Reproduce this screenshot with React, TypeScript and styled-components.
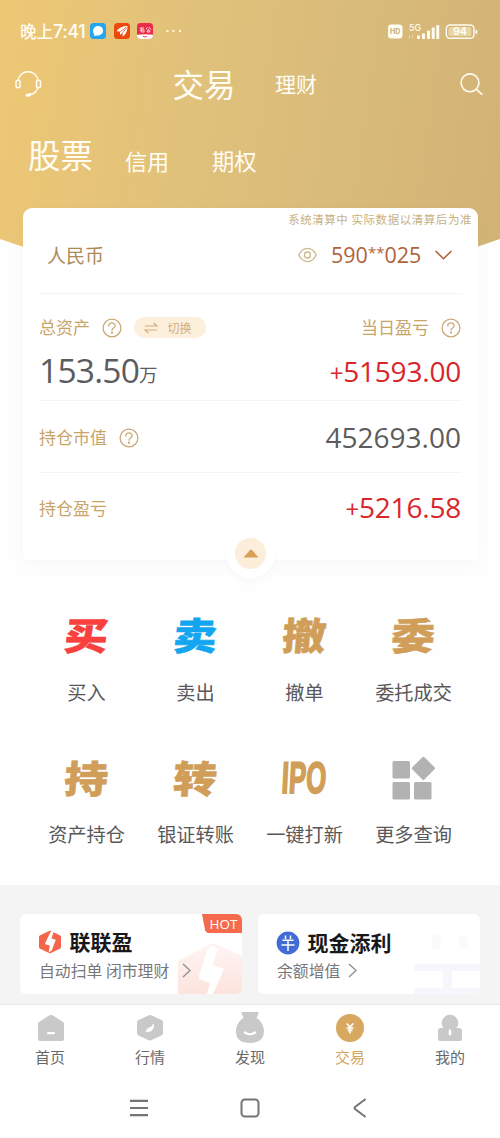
import React from "react";
import styled, { createGlobalStyle } from "styled-components";

const Global = createGlobalStyle`
  * { box-sizing: border-box; }
  body { margin: 0; background: #fff; font-family: "Noto Sans CJK SC", sans-serif; }
  svg { display: block; flex: none; }
`;

const Page = styled.main`
  width: 500px;
  height: 1138px;
  overflow: hidden;
  display: flex;
  flex-direction: column;
  background: #fefefe;
`;

/* ---------- header ---------- */
const Header = styled.header`
  height: 290px;
  flex: none;
  color: #fffdf5;
  background: linear-gradient(98deg, #edc774 0%, #e0c17b 40%, #d8ba7a 70%, #d2b376 100%);
  clip-path: polygon(0 0, 100% 0, 100% 239px, 350px 290px, 150px 290px, 0 239px);
`;
const StatusBar = styled.div`
  height: 62px;
  padding: 0 19px 0 20px;
  display: flex;
  align-items: center;
  justify-content: space-between;
`;
const StatusGroup = styled.div`
  display: flex;
  align-items: center;
`;
const Clock = styled.span`
  font: 500 16.5px/24px "Noto Sans CJK SC", sans-serif;
  width: 70px;
  white-space: nowrap;
  b { font: 500 18px/24px Inter, sans-serif; letter-spacing: -0.4px; }
`;
const AppIcons = styled.div`
  display: flex;
  gap: 7.5px;
  align-items: center;
`;
const TitleBar = styled.div`
  height: 44px;
  display: flex;
  align-items: center;
  padding: 0 16px 0 14px;
`;
const HeadTab = styled.span<{ $size: number; $ml?: number; $top?: number; $up?: number }>`
  font-size: ${(p) => p.$size}px;
  line-height: 44px;
  margin-left: ${(p) => p.$ml ?? 0}px;
  padding-top: ${(p) => p.$top ?? 0}px;
  padding-bottom: ${(p) => p.$up ?? 0}px;
  white-space: nowrap;
`;
const Push = styled.span`
  flex: 1;
`;
const MarketTabs = styled.div`
  display: flex;
  padding: 26px 0 0 28px;
`;

/* ---------- asset card ---------- */
const Card = styled.section`
  position: relative;
  width: 455px;
  height: 352px;
  flex: none;
  margin: -82px 0 0 23px;
  padding: 0 16px;
  background: #fff;
  border-radius: 9px 9px 4px 4px;
  box-shadow: 0 6px 16px rgba(120, 90, 90, 0.04);
`;
const Notice = styled.div`
  height: 22px;
  margin-right: -10px;
  text-align: right;
  font-size: 11.5px;
  letter-spacing: 0.55px;
  line-height: 22px;
  color: #c6b183;
  white-space: nowrap;
`;
const Row = styled.div<{ $h: number; $pl?: number; $pt?: number; $pb?: number }>`
  display: flex;
  align-items: center;
  height: ${(p) => p.$h}px;
  padding: ${(p) => p.$pt ?? 0}px 1px ${(p) => p.$pb ?? 0}px ${(p) => p.$pl ?? 0}px;
`;
const Rule = styled.div`
  height: 1px;
  background: #f5f4f4;
`;
const Currency = styled.span`
  font-size: 19px;
  color: #ae8a59;
`;
const Account = styled.span`
  display: flex;
  font: 400 21.5px/30px "Open Sans", sans-serif;
  color: #b0623a;
  margin: 0 13px 0 14px;
  width: 91px;
  white-space: nowrap;
  i { font-style: normal; font-size: 15px; line-height: 25px; }
`;
const Label = styled.span`
  font-size: 17px;
  line-height: 24px;
  padding-bottom: 2px;
  color: #c9a468;
  margin-right: 12px;
`;
const Switch = styled.span`
  display: flex;
  align-items: center;
  justify-content: center;
  gap: 9px;
  width: 72px;
  height: 21px;
  padding-right: 4px;
  margin-left: 12px;
  border-radius: 11px;
  background: #fcefdc;
  color: #d3ae7b;
  font-size: 12px;
`;
const Amount = styled.span<{ $up?: boolean }>`
  font: 400 28px/36px "Open Sans", sans-serif;
  letter-spacing: ${(p) => (p.$up ? -0.2 : 0)}px;
  padding-bottom: 2px;
  color: ${(p) => (p.$up ? "#d9262c" : "#5c5c5e")};
  i { font-style: normal; font-size: 24px; }
`;
const Total = styled(Amount)`
  font-size: 33.5px;
  letter-spacing: -0.75px;
  padding-bottom: 7px;
`;
const Unit = styled.span`
  font-size: 18.5px;
  line-height: 36px;
  color: #5c5c5e;
  padding-top: 1px;
`;
const Collapse = styled.div`
  position: absolute;
  left: 203px;
  top: 321px;
  width: 49px;
  height: 49px;
  border-radius: 50%;
  background: #fff;
  box-shadow: 0 4px 6px rgba(120, 90, 90, 0.03);
  display: flex;
  align-items: center;
  justify-content: center;
`;
const CollapseDot = styled.div`
  width: 31px;
  height: 31px;
  border-radius: 50%;
  background: #fceedb;
  display: flex;
  align-items: center;
  justify-content: center;
`;

/* ---------- actions ---------- */
const Actions = styled.section`
  display: grid;
  grid-template-columns: repeat(4, 109px);
  grid-auto-rows: 142.5px;
  padding: 45px 32px 0;
  height: 325px;
  flex: none;
`;
const Action = styled.div`
  display: flex;
  flex-direction: column;
  align-items: center;
`;
const GlyphBox = styled.div`
  height: 60px;
  display: flex;
  align-items: center;
  justify-content: center;
`;
const Glyph = styled.span<{ $color: string }>`
  font: 900 42px/60px "Noto Sans CJK SC", sans-serif;
  color: ${(p) => p.$color};
  -webkit-text-stroke: 0.6px ${(p) => p.$color};
  transform: translate(0.5px, -1px) scale(1.04, 0.9) skewX(-4deg);
`;
const Ipo = styled(Glyph)`
  font: 700 43px/60px "Liberation Sans", sans-serif;
  -webkit-text-stroke-width: 1.8px;
  transform: translate(0, -0.5px) scale(0.6, 1.03) skewX(-5deg);
  margin: 0 -20px;
`;
const ActionLabel = styled.span`
  font-size: 19.2px;
  line-height: 28px;
  margin-top: 12.5px;
  color: #58585a;
  white-space: nowrap;
`;

/* ---------- promotions ---------- */
const Promos = styled.section`
  height: 119px;
  flex: none;
  background: #f4f4f4;
  padding: 29px 20px 0;
  display: grid;
  grid-template-columns: 222px 222px;
  gap: 16px;
`;
const Promo = styled.article`
  position: relative;
  height: 80px;
  padding: 13px 0 0 18px;
  background: #fff;
  border-radius: 6px;
  overflow: hidden;
`;
const PromoTitle = styled.div<{ $drop?: number }>`
  position: relative;
  display: flex;
  align-items: center;
  gap: 7.5px;
  height: 30px;
  top: ${(p) => p.$drop ?? 0}px;
  font-weight: 700;
  font-size: 21px;
  line-height: 28px;
  color: #18181a;
  span { padding-bottom: 2px; }
`;
const PromoText = styled.div<{ $gap: number }>`
  position: relative;
  display: flex;
  align-items: center;
  gap: ${(p) => p.$gap}px;
  height: 27px;
  padding-left: 1px;
  font-size: 15.85px;
  color: #77777a;
  white-space: nowrap;
`;
const Watermark = styled.div`
  position: absolute;
  right: 0;
  bottom: 0;
`;
const Hot = styled.div`
  position: absolute;
  right: 0;
  top: 0;
  width: 40px;
  height: 19px;
  padding-left: 3px;
  text-align: center;
  background: #f5694c;
  clip-path: polygon(0 0, 100% 0, 100% 100%, 14% 100%, 8% 88%);
  color: #fff;
  font: 400 13.5px/20px "Open Sans", sans-serif;
`;

/* ---------- bottom navigation ---------- */
const TabBar = styled.nav`
  height: 74px;
  flex: none;
  border-top: 1px solid #e8e8e8;
  background: #fff;
  display: grid;
  grid-template-columns: repeat(5, 100px);
`;
const Tab = styled.div<{ $active?: boolean }>`
  display: flex;
  flex-direction: column;
  align-items: center;
  padding-top: 5px;
  font-size: 15px;
  line-height: 22px;
  color: ${(p) => (p.$active ? "#d3a45e" : "#68686a")};
`;
const SystemNav = styled.div`
  height: 60px;
  flex: none;
  display: flex;
  justify-content: center;
  align-items: center;
  gap: 90.5px;
  padding-right: 1px;
`;

const Help = () => (
  <svg width="20" height="20" viewBox="0 0 20 20" fill="none" stroke="#c9a976" strokeWidth="1.3">
    <circle cx="10" cy="10" r="8.9" />
    <path d="M6.8 8C6.8 3.9 13.3 4 13.2 7.9C13.1 10 10 10.2 10 12.2" strokeLinecap="round" />
    <circle cx="10" cy="14.7" r=".5" fill="#c9a976" />
  </svg>
);

const Chevron = () => (
  <svg width="9" height="15" viewBox="0 0 9 15" fill="none" stroke="#929294" strokeWidth="1.4">
    <path d="M1 1L8 7.5L1 14" />
  </svg>
);

const HexBolt = () => (
  <svg width="24" height="24" viewBox="0 0 24 24">
    <path d="M12 .5L22.2 5.4Q23 6 23 7V17Q23 18 22.2 18.6L12 23.5L1.8 18.6Q1 18 1 17V7Q1 6 1.8 5.4Z" fill="#f4664a" />
    <path d="M15.7 1.5L13.5 8.5L17.8 9.7L13.7 20.5L10.7 22.5L11.7 15.5L7.2 14.2Q6.8 13.5 7.5 12.5L13 1Z" fill="#fff" />
  </svg>
);

const actions = [
  ["买", "买入", "#f8403f"],
  ["卖", "卖出", "#13a5ef"],
  ["撤", "撤单", "#d09e58"],
  ["委", "委托成交", "#d09e58"],
  ["持", "资产持仓", "#d09e58"],
  ["转", "银证转账", "#d09e58"],
  ["IPO", "一键打新", "#d09e58"],
  ["", "更多查询", "#b2b2b2"],
];

export default function App() {
  return (
    <Page>
      <Global />
      <Header>
        <StatusBar>
          <StatusGroup>
            <Clock>晚上<b>7:41</b></Clock>
            <AppIcons>
              <svg width="16" height="16" viewBox="0 0 16 16">
                <rect width="16" height="16" rx="3.5" fill="#23a6f2" />
                <path d="M3.1 8.5C3 4.8 5.5 2.8 8.5 2.9C11.6 3 13.2 5.2 13 8C12.8 11.4 9.5 13 6.5 12.4L3.9 13L4.3 11.4C3.5 10.7 3.1 9.7 3.1 8.5Z" fill="#fff" />
              </svg>
              <svg width="16" height="16" viewBox="0 0 16 16">
                <rect width="16" height="16" rx="3.5" fill="#ec4a0c" />
                <path d="M2.6 8.3C5 4.5 9 3 13.5 3C13.7 7.5 12 11.5 8.5 13.5L8.6 10L6.2 11.8L5.8 8.5Z" fill="#fff" />
                <path d="M12.5 4L5.8 9.2M13 4.5L8 10.4" stroke="#ec4a0c" strokeWidth=".7" />
              </svg>
              <svg width="16" height="16" viewBox="0 0 16 16">
                <rect width="16" height="16" rx="3.5" fill="#ea2e49" />
                <path d="M0 11.8Q8 10.8 16 11.8V12.5Q16 16 12.5 16H3.5Q0 16 0 12.5Z" fill="#fff" />
                <path d="M2.8 5H7M5 5L3 8M4.3 6.8H7V9H4.3ZM10.5 4.2L9 6.2M12 4.2L14 6.7M10 9L11.5 6.2L13 9Z" stroke="#fff" strokeWidth=".8" fill="none" />
                <path d="M6 13.3L8 14L10 13.3" stroke="#ea2e49" strokeWidth=".9" fill="none" />
              </svg>
              <svg width="25" height="4" viewBox="-5 0 25 4" fill="#fff8dc">
                <circle cx="1.5" cy="2" r="1.2" /><circle cx="7.5" cy="2" r="1.2" /><circle cx="14" cy="2" r="1.2" />
              </svg>
            </AppIcons>
          </StatusGroup>
          <svg width="93" height="22" viewBox="0 0 93 22" fill="#fffdf2">
            <rect x="0" y="4.5" width="14.5" height="14" rx="3.2" />
            <text x="7.2" y="14" textAnchor="middle" fontFamily="Inter" fontSize="7" fontWeight="700" fill="#c8ad72">HD</text>
            <text x="21" y="10.5" fontFamily="Inter" fontSize="9" fontWeight="500">5G</text>
            <path d="M21.5 15.5V18.5M24.5 15V18" stroke="#f4e5b2" strokeWidth=".8" />
            <rect x="29" y="15.5" width="3" height="3.5" rx=".8" />
            <rect x="34" y="13.5" width="3" height="5.5" rx=".8" />
            <rect x="39" y="10.5" width="3" height="8.5" rx=".8" />
            <rect x="43.7" y="7.5" width="3" height="11.5" rx=".8" />
            <rect x="48.3" y="5" width="2.9" height="14" rx=".8" />
            <rect x="58.3" y="5" width="27.7" height="13.3" rx="3.8" fill="none" stroke="#fffdf2" strokeWidth="1.4" />
            <rect x="60.3" y="7" width="23" height="9.3" rx="2" fill="#e7d5a4" />
            <rect x="87.5" y="9.8" width="1.8" height="4" rx=".9" />
            <text x="72" y="15.3" textAnchor="middle" fontFamily="Inter" fontSize="10.5" fontWeight="700">94</text>
          </svg>
        </StatusBar>
        <TitleBar>
          <svg width="28" height="28" viewBox="0 0 28 28" fill="none" stroke="#fffdf5" strokeWidth="1.5">
            <path d="M4 10.3C5 5 9.2 1.7 14 1.7S23 5 24.2 10.3M24 17C23 21 20 24 16 24.6" />
            <rect x="2" y="10.2" width="4" height="7.5" rx="2" />
            <rect x="22.5" y="10.2" width="4" height="7.5" rx="2" />
            <path d="M13 25.2L15.8 24.8" strokeWidth="3" strokeLinecap="round" />
          </svg>
          <HeadTab $size={31.5} $ml={130.5} $up={3}>交易</HeadTab>
          <HeadTab $size={21} $ml={39.5} $up={2}>理财</HeadTab>
          <Push />
          <svg width="24" height="24" viewBox="0 0 24 24" fill="none" stroke="#fffdf5" strokeWidth="1.6" strokeLinecap="round">
            <circle cx="10" cy="10.8" r="8.9" />
            <path d="M16.5 17.3L22 22.3" />
          </svg>
        </TitleBar>
        <MarketTabs>
          <HeadTab $size={32.5}>股票</HeadTab>
          <HeadTab $size={22} $ml={32} $top={6}>信用</HeadTab>
          <HeadTab $size={22.3} $ml={43} $top={6}>期权</HeadTab>
        </MarketTabs>
      </Header>

      <Card>
        <Notice>系统清算中 实际数据以清算后为准</Notice>
        <Row $h={63} $pl={8} $pb={14}>
          <Currency>人民币</Currency>
          <Push />
          <svg width="19" height="16" viewBox="0 0 19 16" fill="none" stroke="#ccb88b" strokeWidth="1.3">
            <path d="M.8 8C5-0.8 14-0.8 18.2 8C14 16.8 5 16.8.8 8Z" />
            <circle cx="9.5" cy="8" r="3" />
          </svg>
          <Account>590<i>**</i>025</Account>
          <svg width="26" height="10" viewBox="0 0 26 10" fill="none" stroke="#b0623a" strokeWidth="1.6">
            <path d="M.6 1L8.5 8.7L16.4 1" />
          </svg>
        </Row>
        <Rule />
        <Row $h={52} $pt={15}>
          <Label>总资产</Label>
          <Help />
          <Switch>
            <svg width="14" height="12" viewBox="0 0 14 12" fill="none" stroke="#d3ae7b" strokeWidth="1.2">
              <path d="M1 4H13L9.5 1M13 8H1L4.5 11" />
            </svg>
            切换
          </Switch>
          <Push />
          <Label>当日盈亏</Label>
          <Help />
        </Row>
        <Row $h={54}>
          <Total>153.50</Total>
          <Unit>万</Unit>
          <Push />
          <Amount $up><i>+</i>51593.00</Amount>
        </Row>
        <Rule />
        <Row $h={71} $pt={2}>
          <Label>持仓市值</Label>
          <Help />
          <Push />
          <Amount>452693.00</Amount>
        </Row>
        <Rule />
        <Row $h={72}>
          <Label>持仓盈亏</Label>
          <Push />
          <Amount $up><i>+</i>5216.58</Amount>
        </Row>
        <Collapse>
          <CollapseDot>
            <svg width="16" height="9" viewBox="0 0 16 9"><path d="M.5 8.5L7 1Q8 0 9 1L15.5 8.5Z" fill="#d99f56" /></svg>
          </CollapseDot>
        </Collapse>
      </Card>

      <Actions>
        {actions.map(([glyph, label, color]) => (
          <Action key={label}>
            <GlyphBox>
              {glyph === "" ? (
                <svg width="44" height="44" viewBox="0 0 44 44" fill={color}>
                  <rect x="0.5" y="5" width="17.5" height="17.5" rx="1.5" />
                  <rect x="0.5" y="26" width="17.5" height="17.5" rx="1.5" />
                  <rect x="22" y="26" width="17.5" height="17.5" rx="1.5" />
                  <rect x="22.8" y="3.7" width="17.2" height="17.2" rx="1.5" transform="rotate(45 31.4 12.3)" />
                </svg>
              ) : glyph === "IPO" ? (
                <Ipo $color={color}>{glyph}</Ipo>
              ) : (
                <Glyph $color={color}>{glyph}</Glyph>
              )}
            </GlyphBox>
            <ActionLabel>{label}</ActionLabel>
          </Action>
        ))}
      </Actions>

      <Promos>
        <Promo>
          <Watermark>
            <svg width="64" height="52" viewBox="0 0 64 52">
              <defs>
                <linearGradient id="blush" x1="0" y1="0" x2="0" y2="1">
                  <stop offset="0" stopColor="#fef5f3" />
                  <stop offset="1" stopColor="#fde3dd" />
                </linearGradient>
              </defs>
              <path d="M0 19L32 2Q35 .5 38 2L64 14V52H0Z" fill="url(#blush)" />
              <path d="M29 8L33 4L40 6L35 23L46 27L35 52H29L32 41L21 37V34Z" fill="#fff" />
            </svg>
          </Watermark>
          <Hot>HOT</Hot>
          <PromoTitle>
            <HexBolt />
            <span>联联盈</span>
          </PromoTitle>
          <PromoText $gap={13}>自动扫单 闭市理财<Chevron /></PromoText>
        </Promo>
        <Promo>
          <Watermark>
            <svg width="66" height="62" viewBox="0 0 66 62" fill="#f6f7fd">
              <rect x="18" y="3" width="9" height="14" fill="#fbfbfe" />
              <rect x="45" y="3" width="9" height="14" fill="#fbfbfe" />
              <rect x="0" y="32" width="66" height="7" />
              <rect x="29" y="39" width="9" height="17" />
              <rect x="0" y="56" width="66" height="6" />
            </svg>
          </Watermark>
          <PromoTitle $drop={1}>
            <svg width="24" height="24" viewBox="0 0 24 24" fill="none" stroke="#fff" strokeWidth="1.5">
              <circle cx="12" cy="12" r="11.4" fill="#426bd3" stroke="none" />
              <path d="M9.5 4.5V8M14.5 4.5V8M6.5 9.3H17.5M5.5 14H18.5M12 9.3V20" />
            </svg>
            <span>现金添利</span>
          </PromoTitle>
          <PromoText $gap={8}>余额增值<Chevron /></PromoText>
        </Promo>
      </Promos>

      <TabBar>
        <Tab>
          <svg width="36" height="36" viewBox="0 0 36 36">
            <path d="M6 14Q6 12.7 7 12L17 5.5Q19 4.3 21 5.5L31 12Q32 12.7 32 14V29Q32 31 30 31H8Q6 31 6 29Z" fill="#c9c9c9" />
            <rect x="15" y="22" width="8" height="2.3" rx="1" fill="#fff" />
          </svg>
          首页
        </Tab>
        <Tab>
          <svg width="36" height="36" viewBox="0 0 36 36">
            <path d="M16.3 5.5Q18 4.5 19.7 5.5L29.5 10Q31 10.8 31 12.5V23Q31 24.7 29.5 25.5L19.7 30Q18 31 16.3 30L6.5 25.5Q5 24.7 5 23V12.5Q5 10.8 6.5 10Z" fill="#c9c9c9" />
            <path d="M14 21.5Q15.5 17.500 18.500 17.500Q20.500 16 21.5 14Q22 18.5 19.5 20.5Q17 22.500 14 21.5Z" stroke="#fff" strokeWidth=".8" strokeLinejoin="round" fill="#fff" />
          </svg>
          行情
        </Tab>
        <Tab>
          <svg width="36" height="36" viewBox="0 0 36 36">
            <path d="M10.5 2H25.5Q27 2 26.3 4L24.5 8C30 11 32 17 32 22Q31.5 33 18 33Q4.5 33 4 22C4 17 6 11 11.5 8L9.7 4Q9 2 10.5 2Z" fill="#c9c9c9" />
            <path d="M13 22.5Q18 26 23 22.5" stroke="#fff" strokeWidth="2.2" strokeLinecap="round" fill="none" />
          </svg>
          发现
        </Tab>
        <Tab $active>
          <svg width="36" height="36" viewBox="0 0 36 36">
            <circle cx="18" cy="18" r="14" fill="#d8a860" />
            <path d="M14.7 13.5L18 17L21.3 13.5M18 17V23.5M14.5 18H21.5M15.5 20.3H20.5" stroke="#fff" strokeWidth="1.7" fill="none" />
          </svg>
          交易
        </Tab>
        <Tab>
          <svg width="36" height="36" viewBox="0 0 36 36" fill="#c9c9c9">
            <circle cx="18" cy="13" r="8.3" />
            <path d="M6 21Q6 18 9 18H27Q30 18 30 21V29Q30 31 28 31H8Q6 31 6 29Z" />
            <path d="M18 18.5L19.3 21V24.5L18 26L16.7 24.5V21Z" fill="#fff" />
          </svg>
          我的
        </Tab>
      </TabBar>
      <SystemNav>
        <svg width="20" height="20" viewBox="0 0 20 20" stroke="#747474" strokeWidth="2.2">
          <path d="M1 2.8H19M1 10H19M1 17.2H19" />
        </svg>
        <svg width="20" height="20" viewBox="0 0 20 20" fill="none" stroke="#747474" strokeWidth="2">
          <rect x="1.5" y="1.5" width="17" height="17" rx="3.5" />
        </svg>
        <svg width="20" height="20" viewBox="0 0 20 20" fill="none" stroke="#747474" strokeWidth="2" strokeLinecap="round">
          <path d="M15 1.5L5 9Q4 10 5 11L15 18.5" />
        </svg>
      </SystemNav>
    </Page>
  );
}
